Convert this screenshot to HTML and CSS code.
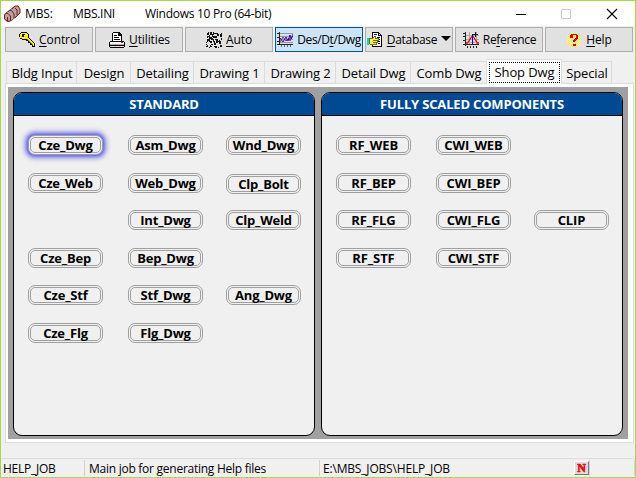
FILE: index.html
```
<!DOCTYPE html>
<html lang="en">
<head>
<meta charset="utf-8">
<title>MBS</title>
<link rel="stylesheet" href="styles.css">
</head>
<body>
<div class="window">
  <header class="titlebar">
    <svg class="app-icon" width="18" height="18" viewBox="0 0 18 18"><path d="M1 10l3-3 8-6h3l2 3v4l-9 8-4 1-3-3z" fill="#b5a3a3"/><path d="M1.500 14v-4L3 8l2 .5L7.500 11v5l-3 .5zM4.500 16v-4M5 7l2-2 2 1 2 3v4M9 4l3-3h3l2 3v4l-5 5M12 3l2 2v5" fill="none" stroke="#8a1414" stroke-width="1"/><path d="M3 8l9-7M8 16l9-8" stroke="#444" stroke-width=".8" fill="none"/></svg>
    <span class="t-app">MBS:</span><span class="t-ini">MBS.INI</span><span class="t-os">Windows 10 Pro (64-bit)</span>
    <svg class="captions" width="104" height="12" viewBox="0 0 104 12"><path d="M0 6.500h10" stroke="#000"/><path d="M45.500 1.500h9v9h-9z" fill="none" stroke="#ccc"/><path d="M91 1l10 10M101 1L91 11" stroke="#000" stroke-width="1.100"/></svg>
  </header>
  <nav class="toolbar">
    <button class="tool control">
      <svg width="16" height="16" viewBox="0 0 16 16" shape-rendering="crispEdges"><path d="M2 0h6v1h1v1h1v4l6 6v3h-3v-2h-2v-2H9V9H7V8H3V7H1V5H0V2h1V1h1z"/><path d="M2 1h6v1h1v4l6 6v2h-1v-2h-2v-2h-2V8H8V7H3V6H1V2h1z" fill="#f8f000"/><path d="M3 2h3v1H5v2H3z" fill="#111"/><path d="M8 7l6 6" stroke="#888000"/></svg>
      <span><u>C</u>ontrol</span></button>
    <button class="tool utilities">
      <svg width="16" height="16" viewBox="0 0 16 16" shape-rendering="crispEdges"><path d="M3 9V1h1V0h6l3 3v6h2v1h1v5h-1v1H1v-1H0v-5h1V9z"/><path d="M4 1h5v3h3v5H4zM1 10h14v2H1z" fill="#fff"/><path d="M5 3h3v1H5zM5 5h5v1H5zM5 7h6v1H5z"/><path d="M1 12h14v1H1z" fill="#aaa"/><path d="M1 14h14v1H1z" fill="#ddd"/><path d="M12 10h2v1h-2z" fill="#d00"/></svg>
      <span><u>U</u>tilities</span></button>
    <button class="tool auto">
      <svg width="16" height="16" viewBox="0 0 16 16" shape-rendering="crispEdges"><g fill="none" stroke="#111"><circle cx="5" cy="4" r="3.500" stroke-width="2" stroke-dasharray="2 1"/><circle cx="5" cy="4" r="1.500"/><circle cx="13" cy="6" r="3" stroke-width="2" stroke-dasharray="2 1"/><circle cx="3" cy="12" r="3" stroke-width="2" stroke-dasharray="1 1"/><circle cx="12" cy="13" r="3" stroke-width="2" stroke-dasharray="2 1"/><path d="M1 7l4 3M9 1h3M7 8l2 3M15 1v2M11 9h3"/></g></svg>
      <span><u>A</u>uto</span></button>
    <button class="tool des active">
      <svg width="16" height="16" viewBox="0 0 16 16"><path d="M2 1.500h14M2 4.500h14M2 7.500h14M2 10.500h14" stroke="#8f9ba3"/><path d="M2.500 0v13M0 12.500h16M0 1.500h2M0 5.500h2M0 9.500h2" stroke="#222"/><path d="M4.500 13v2M7.500 13v2M10.500 13v2M13.500 13v2" stroke="#667"/><path d="M3 10l3-5 3 4 3-3 1 3 3-7" fill="none" stroke="#e01010"/><path d="M3 6l3 4 3-5 2 4 2-6 1 4 2-3" fill="none" stroke="#1010e0"/></svg>
      <span>Des/D<u>t</u>/Dwg</span></button>
    <button class="tool database">
      <svg width="16" height="16" viewBox="0 0 16 16" shape-rendering="crispEdges"><path d="M5.500.5h6l3 3v11h-9z" fill="#fff" stroke="#000"/><path d="M11.500.5v3h3M10 5.500h3M11 7.500h2M11 9.500h2M11 11.500h2" stroke="#000" fill="none"/><path d="M7 2.500h3" stroke="#0000d0"/><path d="M2.500 6.500h3l2-2h1v2h3v2h-1v2h-1v2h-6l-1-1z" fill="#fff451" stroke="#776800"/><path d="M6 8.500h4M6 10.500h3" stroke="#776800"/><path d="M0 6h2v7H0z" fill="#00d5df"/></svg>
      <span><u>D</u>atabase</span><i class="caret"></i></button>
    <button class="tool reference">
      <svg width="16" height="16" viewBox="0 0 16 16"><path d="M2 3.500h14M2 7.500h14M2 10.500h14M6.500 0v13M13.500 0v13" stroke="#aaa"/><path d="M2.500 0v14M0 12.500h16M0 1.500h2M0 4.500h2M0 8.500h2M4.500 14v2M7.500 14v2M10.500 14v2M13.500 14v2" stroke="#222"/><path d="M3 11h1.500l4-6h2l4 6H16" fill="none" stroke="#e01010" stroke-width="1.300"/><path d="M9.500 2v10" stroke="#00c"/><path d="M9 2.500h6M12.500 0v5" stroke="#111"/></svg>
      <span>Re<u>f</u>erence</span></button>
    <button class="tool help">
      <svg width="16" height="16" viewBox="0 0 16 16" shape-rendering="crispEdges"><defs><pattern id="dots" width="2" height="2" patternUnits="userSpaceOnUse"><path d="M0 0h2v2H0z" fill="#fff3b0"/><path d="M0 0h1v1H0zM1 1h1v1H1z" fill="#ffe84a"/></pattern></defs><circle cx="8" cy="8" r="7.500" fill="url(#dots)"/><path d="M5 2h6v1h1v4h-1v1h-1v1H9v1H7V8h1V7h1V6h1V3H7v3H4V3h1zM7 12h3v2H7z" fill="#e00000"/></svg>
      <span><u>H</u>elp</span></button>
  </nav>
  <nav class="tabs">
    <a class="tab w-bldg">Bldg Input</a><a class="tab w-design">Design</a><a class="tab w-detailing">Detailing</a><a class="tab w-drawing">Drawing 1</a><a class="tab w-drawing">Drawing 2</a><a class="tab w-detail">Detail Dwg</a><a class="tab w-comb">Comb Dwg</a><a class="tab w-shop selected"><span>Shop Dwg</span></a><a class="tab w-special">Special</a>
  </nav>
  <main class="pane">
    <div class="backdrop">
      <section class="group">
        <h2>STANDARD</h2>
        <div class="columns">
          <div class="col"><button class="cmd focused">Cze_Dwg</button><button class="cmd">Cze_Web</button><i></i><button class="cmd">Cze_Bep</button><button class="cmd">Cze_Stf</button><button class="cmd">Cze_Flg</button></div>
          <div class="col"><button class="cmd">Asm_Dwg</button><button class="cmd">Web_Dwg</button><button class="cmd">Int_Dwg</button><button class="cmd">Bep_Dwg</button><button class="cmd">Stf_Dwg</button><button class="cmd">Flg_Dwg</button></div>
          <div class="col"><button class="cmd">Wnd_Dwg</button><button class="cmd low">Clp_Bolt</button><button class="cmd">Clp_Weld</button><i></i><button class="cmd">Ang_Dwg</button></div>
        </div>
      </section>
      <section class="group">
        <h2 class="wide">FULLY SCALED COMPONENTS</h2>
        <div class="columns">
          <div class="col"><button class="cmd caps">RF_WEB</button><button class="cmd caps">RF_BEP</button><button class="cmd caps">RF_FLG</button><button class="cmd caps">RF_STF</button></div>
          <div class="col"><button class="cmd caps">CWI_WEB</button><button class="cmd caps">CWI_BEP</button><button class="cmd caps">CWI_FLG</button><button class="cmd caps">CWI_STF</button></div>
          <div class="col"><i></i><i></i><button class="cmd caps">CLIP</button></div>
        </div>
      </section>
    </div>
  </main>
  <footer class="status">
    <span class="s-job">HELP_JOB</span><span class="s-desc">Main job for generating Help files</span><span class="s-path">E:\MBS_JOBS\HELP_JOB</span><span class="s-flag"><b>N</b></span><span class="s-end"></span>
  </footer>
</div>
</body>
</html>
```
FILE: styles.css
```
* { box-sizing: border-box; }
body { margin: 0; font-family: "Open Sans", "Noto Sans", sans-serif; font-size: 12px; color: #000; }
button { font: inherit; color: inherit; padding: 0; margin: 0; }
.window { width: 636px; height: 478px; border: 1px solid #a8d84a; background: #f0f0f0; display: flex; flex-direction: column; overflow: hidden; }

.titlebar { height: 25px; flex: none; background: #fff; display: flex; align-items: center; padding-left: 2px; white-space: nowrap; line-height: 24px; }
.app-icon { margin-right: 4px; }
.t-app { width: 48px; letter-spacing: -.1px; }
.t-ini { width: 72px; letter-spacing: -.3px; }
.t-os { width: 371px; letter-spacing: -.28px; }

.toolbar { display: flex; flex: none; gap: 2px; padding: 1px 0 0 4px; height: 35px; }
.tool { width: 88px; height: 25px; flex: none; border: 1px solid #adadad; background: #e1e1e1; display: flex; align-items: center; justify-content: center; gap: 4px; white-space: nowrap; font-size: 12px; letter-spacing: -.25px; }
.control, .utilities, .auto, .help { letter-spacing: -.1px; }
.control, .utilities { padding-left: 1px; }
.tool svg { flex: none; }
.tool.active { background: #cce4f7; border-color: #005499; letter-spacing: -.4px; }
.tool.database { gap: 4px; letter-spacing: -.3px; }
.tool.reference { letter-spacing: -.35px; padding-left: 1px; }
.tool u { text-underline-offset: 2px; text-decoration-thickness: 1px; }
.caret { border: 5px solid transparent; border-top-color: #000; border-bottom: 0; margin-top: -3px; }

.tabs { display: flex; flex: none; align-items: flex-end; height: 22px; padding-left: 5px; font-size: 13px; line-height: 23px; letter-spacing: -.12px; }
.tab { height: 22px; border: 1px solid #dcdcdc; border-width: 1px 1px 0 0; text-align: center; white-space: nowrap; flex: none; padding-left: 1px; }
.w-bldg { width: 71px; border-left-width: 1px; }
.w-design { width: 54px; }
.w-detailing { width: 63px; }
.w-drawing { width: 71px; }
.w-detail { width: 75px; }
.w-comb { width: 76px; }
.w-shop { width: 75px; }
.w-special { width: 50px; }
.tab.selected { height: 25px; margin: 0 0 -1px; background: #fff; padding: 2px 1px 1px 2px; position: relative; }
.selected span { display: block; border: 1px dotted #000; height: 21px; line-height: 18px; }

.pane { margin-left: 4px; width: 629px; height: 360px; flex: none; border: 1px solid #dcdcdc; background: #fff; padding: 3px 3px 3px 2px; }
.backdrop { width: 620px; height: 352px; background: #a0a0a0; padding: 5px; display: flex; gap: 6px; }
.group { width: 302px; height: 344px; border: 1px solid #000; border-radius: 9px; background: #f0f0f0; overflow: hidden; }
h2 { margin: 0; height: 23px; border-bottom: 1px solid #000; background: #004a94; color: #fff; text-align: center; font-size: 13px; line-height: 22px; letter-spacing: -.2px; }
h2.wide { letter-spacing: -.17px; }
.columns { display: grid; grid-template-columns: 100px 98px 75px; padding: 19px 0 0 14px; }
.col { display: grid; grid-template-rows: 38px 37px 38px 37px 38px 20px; }
.cmd { width: 75px; height: 20px; border: 3px double #a0a0a0; border-radius: 7px; background: #f0f0f0; font-weight: 700; font-size: 13px; line-height: 13px; letter-spacing: -.2px; white-space: nowrap; display: flex; justify-content: center; align-items: center; }
.caps { letter-spacing: -.1px; }
.low { margin-top: 1px; }
.focused { box-shadow: 0 0 3px 1px #5a5af0, 0 0 4px 4px #a2a2ea; }

.status { margin-top: 15px; height: 19px; flex: none; border-top: 1px solid #dcdcdc; display: flex; align-items: center; line-height: 18px; white-space: nowrap; font-size: 12px; letter-spacing: -.26px; }
.status > span { height: 16px; line-height: 18px; border-right: 1px solid #d2d2d2; }
.s-job { width: 84px; padding-left: 2px; }
.s-desc { width: 235px; padding-left: 4px; }
.s-path { width: 254px; padding-left: 3px; letter-spacing: -.18px; }
.status > .s-path { border: 0; }
.s-flag { width: 16px; }
.s-end { width: 45px; }
.s-flag b { display: block; width: 15px; height: 14px; margin-top: 1px; border: 1px solid #fff; border-right: 1px solid #777; border-bottom: 1px solid #777; background: #ddd; color: #f00; font: 900 12px/12px "Liberation Serif", serif; text-align: center; -webkit-text-stroke: .6px #f00; }
```
